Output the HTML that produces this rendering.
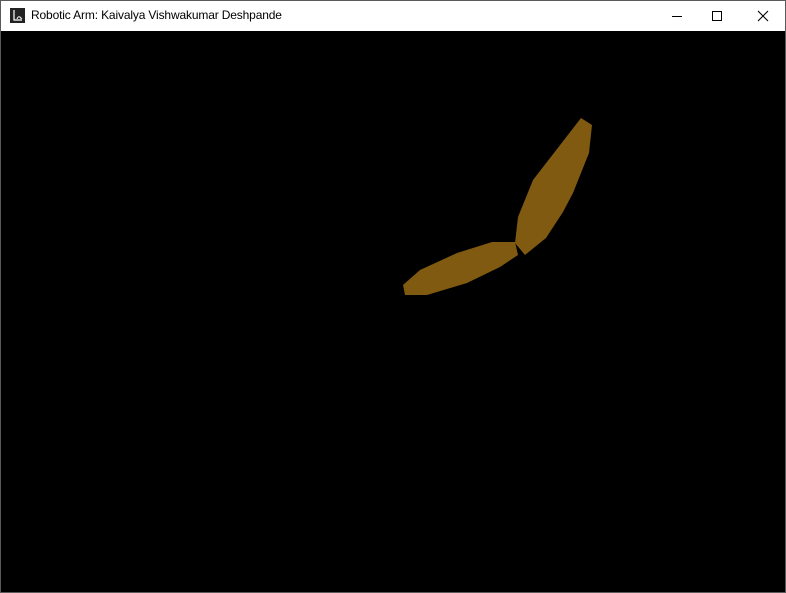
<!DOCTYPE html>
<html><head><style>
html,body{margin:0;padding:0;width:786px;height:593px;overflow:hidden;background:#000}
.win{position:absolute;left:0;top:0;width:784px;height:591px;border:1px solid #5a5a5a;background:#000}
.tb{position:absolute;left:0;top:0;width:784px;height:30px;background:#fff}
.tt{position:absolute;left:30px;top:7px;font:12px "Liberation Sans",sans-serif;letter-spacing:-0.15px;color:#000}
.ic{position:absolute;left:9px;top:7px;width:15px;height:15px;background:#222}
</style></head><body>
<div class="win">
<div class="tb">
<div class="ic"><svg width="15" height="15"><path d="M4 2 L4 12 L12 12" stroke="#fff" fill="none" stroke-width="1.2"/><path d="M7 11 Q8 8 10 9 Q11 11 12 10" stroke="#fff" fill="none" stroke-width="1"/></svg></div>
<div class="tt">Robotic Arm: Kaivalya Vishwakumar Deshpande</div>
<svg style="position:absolute;left:660px;top:8px" width="120" height="16">
<path d="M11 7.5 H21" stroke="#000" stroke-width="1"/>
<rect x="51.5" y="2.5" width="9" height="9" stroke="#000" fill="none"/>
<path d="M97 2 L107 12 M107 2 L97 12" stroke="#000" stroke-width="1.1"/>
</svg>
</div>
<svg style="position:absolute;left:-1px;top:-1px" width="786" height="593">
<polygon fill="#7f5a10" points="581,118 592,125 589,153 573,193 563,212 546,238 525,255 515,243 518,217 533,180"/>
<polygon fill="#7f5a10" points="403,285 405,295 427,295 467,283 500,267 518,255 515,242 492,242 457,253 420,270"/>
</svg>
</div>
</body></html>
